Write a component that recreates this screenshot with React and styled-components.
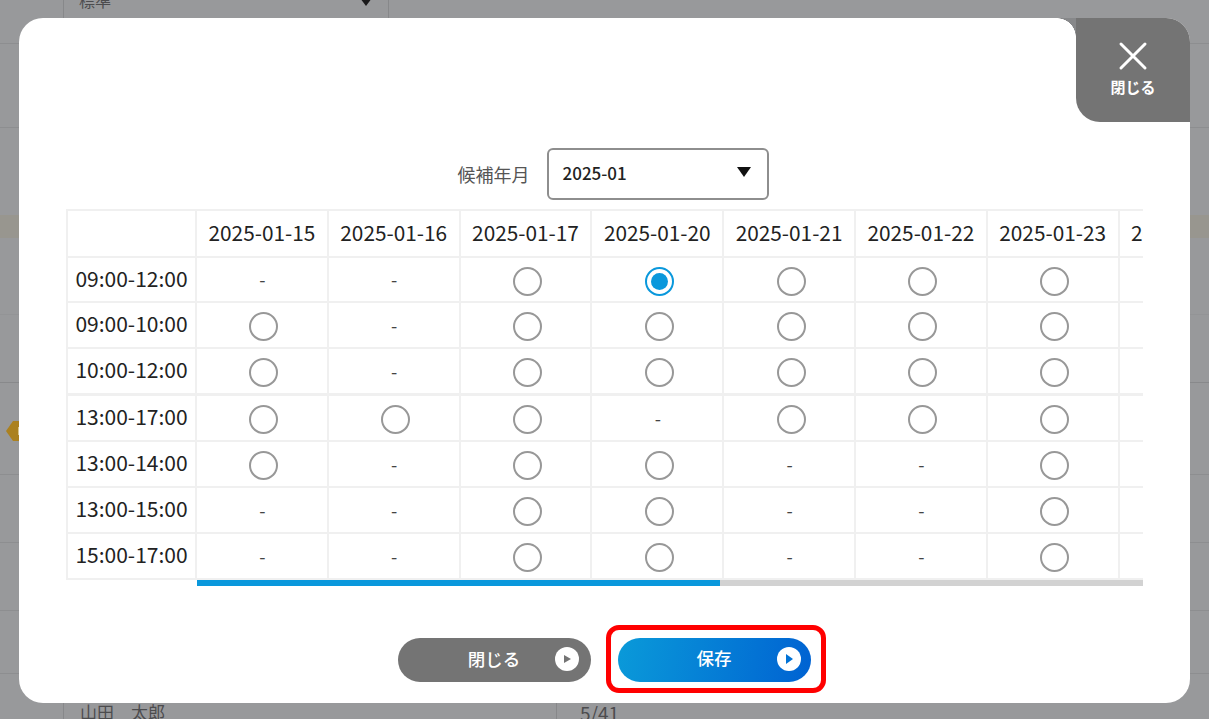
import React from "react";
import styled, { createGlobalStyle } from "styled-components";

const dates = [
  "2025-01-15",
  "2025-01-16",
  "2025-01-17",
  "2025-01-20",
  "2025-01-21",
  "2025-01-22",
  "2025-01-23",
  "2025-01-24",
];

// o = radio, x = not available, s = selected
const rows = [
  { time: "09:00-12:00", cells: "xxosooo", height: 45 },
  { time: "09:00-10:00", cells: "oxooooo", height: 46 },
  { time: "10:00-12:00", cells: "oxooooo", height: 47, thick: true },
  { time: "13:00-17:00", cells: "oooxooo", height: 46 },
  { time: "13:00-14:00", cells: "oxooxxo", height: 46 },
  { time: "13:00-15:00", cells: "xxooxxo", height: 46 },
  { time: "15:00-17:00", cells: "xxooxxo", height: 46 },
];

const backdropRows = [
  { height: 44, line: "#8d8e90" },
  { height: 84, line: "#8d8e90" },
  { height: 87 },
  { height: 23, band: true },
  { height: 77, line: "#939496" },
  { height: 68, line: "#88898b" },
  { height: 92, line: "#8d8e90" },
  { height: 68, line: "#8d8e90" },
  { height: 68, line: "#8d8e90" },
  { height: 63, line: "#8d8e90" },
];

const GlobalStyle = createGlobalStyle`
  html, body {
    margin: 0;
    padding: 0;
    height: 100%;
    overflow: hidden;
    background: #98999b;
    font-family: "Noto Sans CJK JP", "Noto Sans", sans-serif;
  }
`;

const Page = styled.div`
  position: relative;
  width: 1209px;
  height: 719px;
  overflow: hidden;
  background: #98999b;
`;

const BackRow = styled.div`
  height: ${(p) => p.$height}px;
  box-sizing: border-box;
  background: ${(p) => (p.$band ? "#98968f" : "transparent")};
  border-bottom: ${(p) => (p.$line ? `1px solid ${p.$line}` : "none")};
`;

const BackTop = styled.div`
  position: absolute;
  left: 63px;
  top: 0;
  width: 326px;
  height: 44px;
  box-sizing: border-box;
  border-left: 1px solid #87888a;
  border-right: 1px solid #87888a;
  padding: 0 15px;
  font-size: 16px;
  line-height: 1px;
  color: #4c4c4e;
`;

const BackArrow = styled.span`
  position: absolute;
  right: 16px;
  top: -2px;
  width: 0;
  height: 0;
  border-left: 6px solid transparent;
  border-right: 6px solid transparent;
  border-top: 8px solid #1a1a1b;
`;

const BackBottom = styled.div`
  position: absolute;
  left: 63px;
  top: 703px;
  width: 494px;
  height: 16px;
  box-sizing: border-box;
  border-left: 1px solid #87888a;
  border-right: 1px solid #87888a;
  padding-left: 16px;
  font-size: 17px;
  line-height: 18px;
  color: #4c4c4e;
`;

const BackCount = styled.span`
  position: absolute;
  left: 516px;
  top: 1px;
  font-size: 19px;
`;

const Tag = styled.span`
  position: absolute;
  left: 6px;
  top: 421px;
  width: 14px;
  height: 20px;
  background: #ab8120;
  clip-path: polygon(0 50%, 50% 0, 100% 0, 100% 100%, 50% 100%);

  &::after {
    content: "";
    position: absolute;
    right: 0;
    top: 6px;
    width: 2px;
    height: 8px;
    background: #d8c690;
  }
`;

const Modal = styled.div`
  position: absolute;
  left: 19px;
  top: 18px;
  width: 1171px;
  height: 685px;
  box-sizing: border-box;
  padding: 130px 47px 0;
  background: #fff;
  border-radius: 24px;
  display: flex;
  flex-direction: column;
`;

const CloseTab = styled.button`
  position: absolute;
  right: 0;
  top: 0;
  width: 114px;
  height: 104px;
  padding: 22px 0 0;
  border: none;
  border-radius: 0 24px 0 24px;
  background: #747474;
  color: #fff;
  font-family: inherit;
  font-size: 15px;
  font-weight: 700;
  line-height: 20px;
  display: flex;
  flex-direction: column;
  align-items: center;
  gap: 5px;

  /* the white panel's own corner shows just left of the tab */
  &::before {
    content: "";
    position: absolute;
    left: -19px;
    top: 0;
    width: 19px;
    height: 19px;
    background: radial-gradient(circle at 0 100%, #fff 18.5px, #87888a 19px);
  }
`;

const MonthRow = styled.div`
  display: flex;
  justify-content: center;
  align-items: center;
  gap: 17px;
  height: 52px;
  margin-left: 17px;
  margin-bottom: 9px;
`;

const MonthLabel = styled.label`
  font-size: 18px;
  color: #555;
  margin-bottom: 1px;
`;

const MonthSelect = styled.div`
  width: 222px;
  height: 52px;
  box-sizing: border-box;
  border: 2px solid #8e8e8e;
  border-radius: 6px;
  padding: 0 14px 4px;
  display: flex;
  align-items: center;
  justify-content: space-between;
  font-size: 17px;
  font-weight: 500;
  color: #222;
`;

const Caret = styled.span`
  width: 0;
  height: 0;
  margin-right: 2px;
  border-left: 7px solid transparent;
  border-right: 7px solid transparent;
  border-top: 10px solid #111;
`;

const Scroller = styled.div`
  width: 1077px;
  overflow: hidden;
`;

const Grid = styled.div`
  display: grid;
  grid-template-columns: 129px repeat(8, 131.8px);
  width: max-content;
  border-top: 2px solid #f0f0f0;
  border-left: 2px solid #f0f0f0;
`;

const Cell = styled.div`
  height: ${(p) => p.$height}px;
  box-sizing: border-box;
  padding-bottom: ${(p) => p.$lift || 1}px;
  display: flex;
  align-items: center;
  justify-content: center;
  border-right: 2px solid #f0f0f0;
  border-bottom: ${(p) => (p.$thick ? 3 : 2)}px solid #f0f0f0;
  font-size: ${(p) => p.$size}px;
  color: #222;
`;

const Radio = styled.span`
  width: 29px;
  height: 29px;
  box-sizing: border-box;
  border-radius: 50%;
  border: 2px solid ${(p) => (p.$on ? "#0a98dc" : "#989898")};
  margin: 4px 0 0 4px;
  display: flex;
  align-items: center;
  justify-content: center;

  &::after {
    content: "";
    display: ${(p) => (p.$on ? "block" : "none")};
    width: 17px;
    height: 17px;
    border-radius: 50%;
    background: #0a98dc;
  }
`;

const Dash = styled.span`
  font-size: 18px;
  color: #444;
  margin-left: 1px;
`;

const Track = styled.div`
  width: 946px;
  height: 6px;
  margin-left: 131px;
  background: #d2d2d2;
`;

const Thumb = styled.div`
  width: 523px;
  height: 6px;
  background: #0a98dc;
`;

const Actions = styled.div`
  margin-top: 52px;
  display: flex;
  justify-content: center;
  gap: 27px;
  margin-left: -1px;
`;

const Highlight = styled.div`
  position: absolute;
  left: 587px;
  top: 607px;
  width: 220px;
  height: 68px;
  box-sizing: border-box;
  border: 5px solid #f00;
  border-radius: 13px;
`;

const Pill = styled.button`
  position: relative;
  width: 193px;
  height: 44px;
  padding: 0 0 ${(p) => (p.$primary ? 6 : 4)}px;
  border: none;
  border-radius: 22px;
  background: ${(p) => (p.$primary ? "linear-gradient(100deg, #0a9ad9, #0062d2)" : "#747474")};
  color: #fff;
  font-family: inherit;
  font-size: 17.5px;
  font-weight: 500;
`;

const PlayDot = styled.span`
  position: absolute;
  right: ${(p) => (p.$primary ? 10 : 12)}px;
  top: 9px;
  width: 24px;
  height: 24px;
  border-radius: 50%;
  background: #fff;
  display: flex;
  align-items: center;
  justify-content: center;

  &::after {
    content: "";
    margin-left: 2px;
    border-top: ${(p) => (p.$primary ? 5 : 4)}px solid transparent;
    border-bottom: ${(p) => (p.$primary ? 5 : 4)}px solid transparent;
    border-left: 7px solid ${(p) => (p.$primary ? "#0072d6" : "#747474")};
  }
`;

const App = () => {
  return (
    <Page>
      <GlobalStyle />
      {backdropRows.map((r, i) => (
        <BackRow key={i} $height={r.height} $line={r.line} $band={r.band} />
      ))}
      <BackTop>
        標準
        <BackArrow />
      </BackTop>
      <BackBottom>
        山田　太郎
        <BackCount>5/41</BackCount>
      </BackBottom>
      <Tag />
      <Modal>
        <CloseTab>
          <svg width="32" height="32" viewBox="0 0 32 32" fill="none" stroke="#fff" strokeWidth="3" strokeLinecap="round">
            <path d="M4 4 L28 28 M28 4 L4 28" />
          </svg>
          閉じる
        </CloseTab>
        <MonthRow>
          <MonthLabel>候補年月</MonthLabel>
          <MonthSelect>
            2025-01
            <Caret />
          </MonthSelect>
        </MonthRow>
        <Scroller>
          <Grid>
            <Cell $height={47} />
            {dates.map((d) => (
              <Cell key={d} $height={47} $size={20.8} $lift={3}>
                {d}
              </Cell>
            ))}
            {rows.map((r) => (
              <React.Fragment key={r.time}>
                <Cell $height={r.height} $thick={r.thick} $size={21} $lift={4}>
                  {r.time}
                </Cell>
                {[...r.cells, "e"].map((c, i) => (
                  <Cell key={i} $height={r.height} $thick={r.thick}>
                    {c === "x" && <Dash>-</Dash>}
                    {(c === "o" || c === "s") && <Radio $on={c === "s"} />}
                  </Cell>
                ))}
              </React.Fragment>
            ))}
          </Grid>
          <Track>
            <Thumb />
          </Track>
        </Scroller>
        <Actions>
          <Pill>
            閉じる
            <PlayDot />
          </Pill>
          <Pill $primary>
            保存
            <PlayDot $primary />
          </Pill>
        </Actions>
        <Highlight />
      </Modal>
    </Page>
  );
};

export default App;
